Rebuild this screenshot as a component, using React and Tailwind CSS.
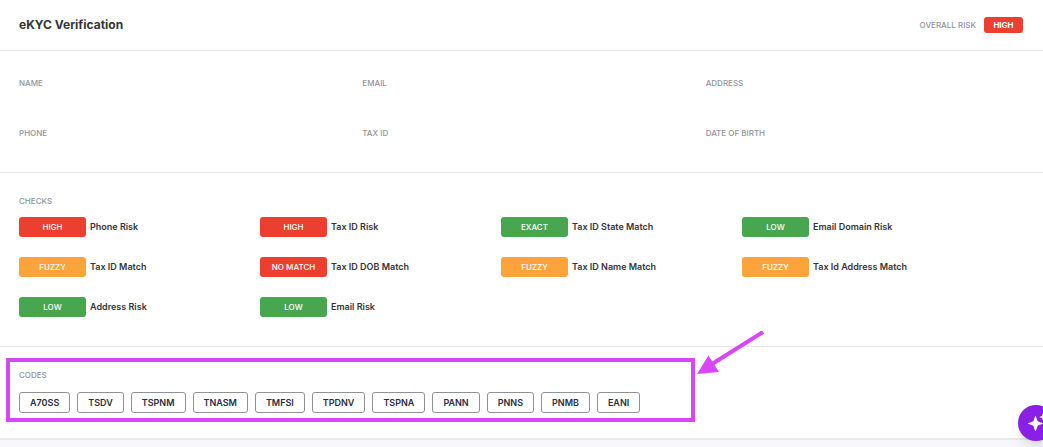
const TONES = {
  red: "bg-[#eb4030]",
  amber: "bg-[#faa43a]",
  green: "bg-[#48a651]",
};

const DETAILS = ["Name", "Email", "Address", "Phone", "Tax ID", "Date of Birth"];

const CHECKS = [
  ["HIGH", "red", "Phone Risk"],
  ["HIGH", "red", "Tax ID Risk"],
  ["EXACT", "green", "Tax ID State Match"],
  ["LOW", "green", "Email Domain Risk"],
  ["FUZZY", "amber", "Tax ID Match"],
  ["NO MATCH", "red", "Tax ID DOB Match"],
  ["FUZZY", "amber", "Tax ID Name Match"],
  ["FUZZY", "amber", "Tax Id Address Match"],
  ["LOW", "green", "Address Risk"],
  ["LOW", "green", "Email Risk"],
];

const CODES = ["A70SS", "TSDV", "TSPNM", "TNASM", "TMFSI", "TPDNV", "TSPNA", "PANN", "PNNS", "PNMB", "EANI"];

function Label({ as: Tag = "h2", children }) {
  return <Tag className="text-[8px] leading-3 font-medium uppercase text-[#909399]">{children}</Tag>;
}

function Check({ result, tone, name }) {
  return (
    <li className="flex items-center gap-1">
      <span className={`flex h-5 w-[67px] shrink-0 items-center justify-center rounded-[3px] text-[8px] font-medium text-white ${TONES[tone]}`}>
        {result}
      </span>
      <span className="text-[9px] leading-4 font-semibold whitespace-nowrap text-[#333437]">{name}</span>
    </li>
  );
}

export default function App() {
  return (
    <div className="relative min-h-screen overflow-hidden bg-[#f8f8fc] font-['Inter',sans-serif]">
      <main className="border-b-2 border-[#e8e8f0] bg-white">
        <header className="flex h-[51px] items-center justify-between border-b border-[#e6e6f2] pr-5 pl-[19px]">
          <h1 className="text-[12px] leading-5 font-bold text-[#333437]">eKYC Verification</h1>
          <div className="flex items-center gap-2">
            <Label as="span">Overall Risk</Label>
            <span className="flex h-4 w-[39px] items-center justify-center rounded-[3px] bg-[#eb4030] text-[8px] font-bold text-white">HIGH</span>
          </div>
        </header>

        <section className="border-b border-[#e6e6f2] pt-[26px] pr-5 pb-[33px] pl-[19px]">
          <dl className="grid grid-cols-3 gap-x-[26px] gap-y-[38px]">
            {DETAILS.map((name) => (
              <div key={name}>
                <Label as="dt">{name}</Label>
              </div>
            ))}
          </dl>
        </section>

        <section className="border-b border-[#e6e6f2] pt-[22px] pr-[60px] pb-[29px] pl-[19px]">
          <Label>Checks</Label>
          <ul className="mt-2.5 grid grid-cols-4 gap-y-5">
            {CHECKS.map(([result, tone, name]) => (
              <Check key={name} result={result} tone={tone} name={name} />
            ))}
          </ul>
        </section>

        <section className="relative pt-[22px] pr-5 pb-[25px] pl-[19px]">
          <Label>Codes</Label>
          <ul className="mt-[11px] flex flex-wrap gap-[7px]">
            {CODES.map((code) => (
              <li key={code} className="flex h-[21px] items-center rounded-[3px] border border-[#8f9197] px-2.5 text-[9px] font-semibold text-[#2a2c40]">
                {code}
              </li>
            ))}
          </ul>
          <div className="pointer-events-none absolute top-[11px] left-1.5 h-16 w-[689px] border-4 border-[#d946f7]" />
          <svg className="pointer-events-none absolute -top-4 left-[697px]" width="67" height="44" viewBox="0 0 67 44" fill="#d946f7" aria-hidden="true">
            <path d="M0 43 11.500 24.500 22 41Z" />
            <path d="M15 33 66 1" stroke="#d946f7" strokeWidth="4" />
          </svg>
        </section>
      </main>

      <button type="button" aria-label="Open assistant" className="absolute -right-[11px] bottom-1.5 flex size-9 items-center justify-center rounded-full bg-[#8a1fe6] shadow-lg">
        <svg width="20" height="20" viewBox="0 0 20 20" fill="#fff" aria-hidden="true">
          <path d="M9.500 3C10.300 3 10.800 7 11.700 8.300 13 9.200 17 9.700 17 10.500 17 11.300 13 11.800 11.700 12.700 10.800 14 10.300 18 9.500 18 8.700 18 8.200 14 7.300 12.700 6 11.800 2 11.300 2 10.500 2 9.700 6 9.200 7.300 8.300 8.200 7 8.700 3 9.500 3Z" />
          <path d="M17 .5C17.500 .5 17.600 2.600 18.100 3 18.500 3.500 20 3.600 20 4 20 4.500 18.500 4.600 18.100 5.100 17.600 5.500 17.500 7.500 17 7.500 16.500 7.500 16.400 5.500 15.900 5.100 15.500 4.600 13.500 4.500 13.500 4 13.500 3.600 15.500 3.500 15.900 3 16.400 2.600 16.500 .5 17 .5Z" />
        </svg>
      </button>
    </div>
  );
}
